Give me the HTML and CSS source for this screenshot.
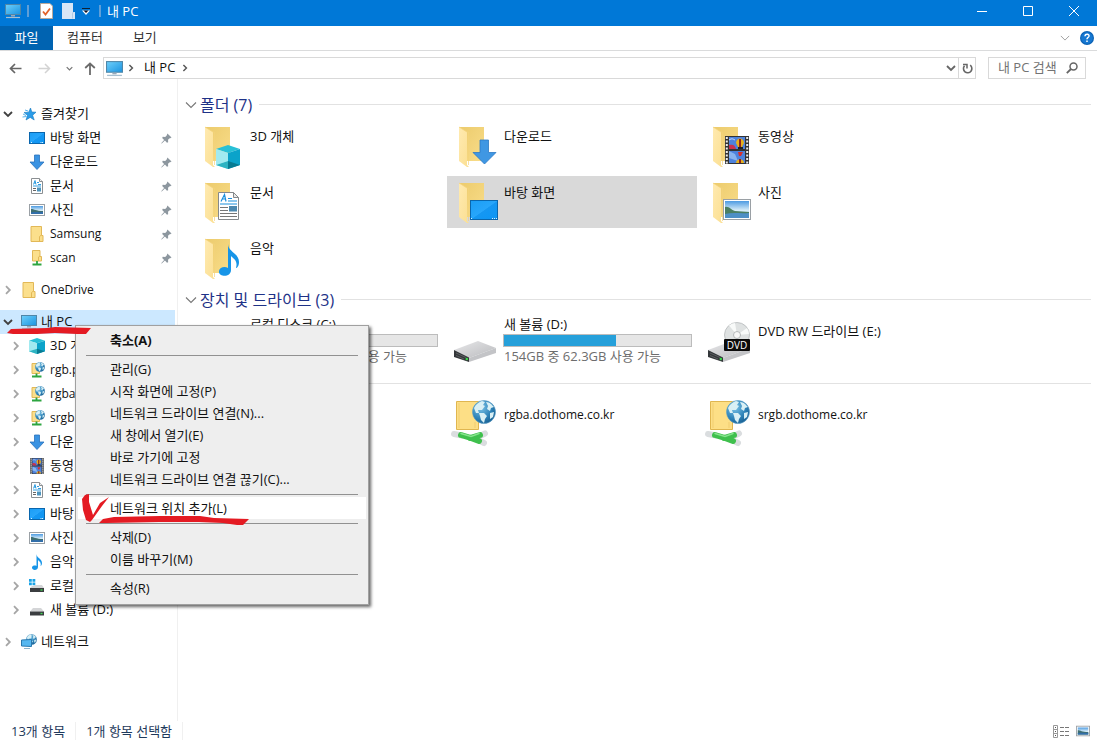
FILE: index.html
```html
<!DOCTYPE html>
<html lang="ko">
<head>
<meta charset="utf-8">
<title>내 PC</title>
<link rel="stylesheet" href="styles.css">
</head>
<body>
<svg class="sprite" aria-hidden="true">
  <defs>
    <linearGradient id="gScreen" x1="0" y1="0" x2="1" y2="1"><stop offset="0" stop-color="#6fd0fb"/><stop offset="1" stop-color="#1a93e0"/></linearGradient>
    <linearGradient id="gDesk" x1="0" y1="0" x2="1" y2="1"><stop offset="0" stop-color="#1b9df5"/><stop offset=".5" stop-color="#27a6fb"/><stop offset=".52" stop-color="#1597f2"/><stop offset="1" stop-color="#0c96f5"/></linearGradient>
    <linearGradient id="gFold" x1="0" y1="0" x2="1" y2="1"><stop offset="0" stop-color="#eccb6c"/><stop offset="1" stop-color="#f9dd8a"/></linearGradient>
    <linearGradient id="gFlap" x1="0" y1="0" x2="1" y2="1"><stop offset="0" stop-color="#ffeab0"/><stop offset="1" stop-color="#fbdf92"/></linearGradient>
    <linearGradient id="gSky" x1="0" y1="0" x2="0" y2="1"><stop offset="0" stop-color="#4d9be2"/><stop offset=".55" stop-color="#d8edf8"/><stop offset="1" stop-color="#8fbfdf"/></linearGradient>
    <linearGradient id="gMetal" x1="0" y1="0" x2="1" y2="1"><stop offset="0" stop-color="#e8e8ea"/><stop offset="1" stop-color="#b9babd"/></linearGradient>
    <radialGradient id="gGlobe" cx=".35" cy=".3" r=".8"><stop offset="0" stop-color="#7cc4e8"/><stop offset=".6" stop-color="#2e83b8"/><stop offset="1" stop-color="#155a8c"/></radialGradient>
  </defs>
  <symbol id="monitor" viewBox="0 0 16 16"><rect x=".5" y="1.500" width="15" height="10" fill="url(#gScreen)" stroke="#4f86a8"/><path d="M6 12h4v1.500H6z" fill="#9ab"/><path d="M1 14.500h14" stroke="#a7bfd0" stroke-width="1.200"/></symbol>
  <symbol id="desktop" viewBox="0 0 16 16"><rect x=".5" y="2.500" width="15" height="11" fill="url(#gDesk)" stroke="#0a66ad"/><path d="M2 12.500h1M11.500 12.500h3" stroke="#d6efff" stroke-dasharray="1 .5"/></symbol>
  <symbol id="down" viewBox="0 0 16 16"><path d="M5.500 1h5v7h4.500L8 15.500 1 8h4.500z" fill="#3a93e2" stroke="#2a72bd" stroke-width=".8"/></symbol>
  <symbol id="doc" viewBox="0 0 16 16"><path d="M2.500.5h8l3 3v12h-11z" fill="#fff" stroke="#8b8f92"/><path d="M10.500.5v3h3" fill="#eee" stroke="#8b8f92"/><path d="M4.500 6.500l1.500-4 1 4M5 5h2M8 4.500h2M4 8h8M9 6.500h3" stroke="#1c93dc" stroke-width=".9" fill="none"/><path d="M4 10.500h3M4 12.500h3" stroke="#666"/><path d="M8 9.500h4v4H8z" fill="#4d95be"/></symbol>
  <symbol id="pic" viewBox="0 0 16 16"><rect x=".5" y="2.500" width="15" height="11" fill="#fff" stroke="#9aa0a5"/><rect x="2" y="4" width="12" height="8" fill="url(#gSky)"/><path d="M2 7c3 0 5 2 12 2v3H2z" fill="#3f6f72"/><path d="M2 10.500c4-1 8 0 12-.5v2H2z" fill="#326eaa"/></symbol>
  <symbol id="folder" viewBox="0 0 16 16"><path d="M2 .5h10.500v9h1.500v6H2z" fill="#fbdf8c" stroke="#e2b857"/><path d="M10.500 15v-4.500l2-1.500" stroke="#e2b857" fill="none"/></symbol>
  <symbol id="netfolder" viewBox="0 0 16 16"><path d="M3.500.5h7.500v6h1.500v4.500h-9z" fill="#fbdf8c" stroke="#e2b857"/><path d="M9.500 11V7l1.500-1" stroke="#e2b857" fill="none"/><path d="M8 11v3M3.500 14.500h9" stroke="#2da540" stroke-width="1.800"/></symbol>
  <symbol id="globe" viewBox="0 0 24 24"><circle cx="12" cy="12" r="11.500" fill="url(#gGlobe)" stroke="#5d9fc7" stroke-width=".6"/><path d="M2 8c2-4 5-6 8-7l3 1-2 3 2 1-3 4-4 0 1 3-3 0zM14 2c4 0 6 3 8 5l-3 1-1 3-3-2 1-3zM7 13l5 0 3 3-2 3-1 4-3-3-1-4zM18 13l4-1-1 5-3 2z" fill="#d9f0f5"/></symbol>
  <symbol id="ftp" viewBox="0 0 16 16"><path d="M3 1.500h7.500v10H3z" fill="#fbdf8c" stroke="#e2b857"/><use href="#globe" x="6" y="0" width="10" height="10"/><path d="M7.500 11.500v3M3 14.500h9.500" stroke="#2da540" stroke-width="1.800"/></symbol>
  <symbol id="cube" viewBox="0 0 24 24"><path d="M12 0L24 4 12 8 0 4z" fill="#28c0d6"/><path d="M0 4l12 4v16L0 20z" fill="#7fe0ea"/><path d="M24 4L12 8v16l12-4z" fill="#0ba3ca"/><path d="M0 20l12-4v8z" fill="#2db3c2"/><path d="M24 20l-12-4v8z" fill="#077b92"/><path d="M0 4l12 4v8L0 20z" fill="#b8f0f3" opacity=".6"/></symbol>
  <symbol id="film" viewBox="0 0 24 28"><path d="M0 0h24v28H0z" fill="#333"/><path d="M1.800 1v27M22.200 1v27" stroke="#ececec" stroke-width="2" stroke-dasharray="2 1.500"/><path d="M4 1h16v12H4zM4 15h16v12H4z" fill="#4d82dc"/><path d="M4 9c4-1 6 0 7 4H4z" fill="#c8324f"/><path d="M4 15l6 3 3 7-9-3z" fill="#89b3ee"/><path d="M4 4c3-2 4-1 6 0" stroke="#cfe0ff" fill="none"/><path d="M11 7c0-6 8-6 8 0l-2 4h-4z" fill="#e5b01c"/><path d="M14 3h2v8h-2z" fill="#8e2420"/><path d="M13 11h5v2h-5z" fill="#222"/><path d="M13 16h5l-2 4h-2z" fill="#d92f2c"/><path d="M11 27c0-5 8-5 8 0z" fill="#e5b01c"/><path d="M14 23h2v4h-2z" fill="#8e2420"/></symbol>
  <symbol id="music" viewBox="0 0 22 32"><path d="M10 0c0 8 11 9 11 18 0 4-2 6-3 6 2-7-2-9-5-12v14c0 8-13 7-12 1 .5-4 6-5 9-3z" fill="#1795e8"/></symbol>
  <symbol id="sdrive" viewBox="0 0 16 16"><path d="M4 6h8l3 3.500H1z" fill="#d4d5d7"/><path d="M1 9.500h14v4H1z" fill="#3b3d40"/><path d="M11.500 11.500h2" stroke="#3fdd52" stroke-width="1.300"/></symbol>
  <symbol id="windrive" viewBox="0 0 16 16"><path d="M0 1h2.800v2.800H0zM3.500 1h2.800v2.800H3.500zM0 4.500h2.800v2.800H0zM3.500 4.500h2.800v2.800H3.500z" fill="#19a2e6"/><path d="M5 7h8l2 3H1l2-2h2z" fill="#d4d5d7"/><path d="M1 10h14v4H1z" fill="#3b3d40"/><path d="M11.500 12h2" stroke="#3fdd52" stroke-width="1.300"/></symbol>
  <symbol id="network" viewBox="0 0 16 16"><use href="#globe" x="5" y="0" width="11" height="11"/><path d="M.5 6l10-.5v7l-10-.5z" fill="#55b7f0" stroke="#2a78ae"/><path d="M3 14.500h6" stroke="#8db4cc"/></symbol>
  <symbol id="star" viewBox="0 0 16 16"><path d="M9.500 2l1.300 4 4.200.2-3.400 3L13.200 14 9.200 11.400 5 14l1.500-4.700L3 6.500l4.700-.3z" fill="#2b9ce8" stroke="#1478c0" stroke-width=".6"/><path d="M2 8l3 1.500M1.500 11l4-.5M4 4l3 1" stroke="#55b3ee"/></symbol>
  <symbol id="pin" viewBox="0 0 12 12"><path d="M7 .5L11.500 5l-1.500.7-1 .2-1.300 1.500.1 2.600-1.300.5-2.200-2.300L.8 11.500.2 11.300l3.200-3.700L1.300 5.500l.6-1.300 2.700.1L6.200 2.800z" fill="#8d979f"/></symbol>
  <symbol id="right" viewBox="0 0 10 10"><path d="M3 1.200L6.800 5 3 8.800" fill="none" stroke="currentColor" stroke-width="1.800"/></symbol>
  <symbol id="open" viewBox="0 0 10 10"><path d="M1 3l4 4 4-4" fill="none" stroke="currentColor" stroke-width="1.800"/></symbol>
  <symbol id="thin" viewBox="0 0 12 12"><path d="M1 3.500l5 5 5-5" fill="none" stroke="currentColor" stroke-width="1.100"/></symbol>
  <symbol id="bigfolder" viewBox="0 0 48 48"><path d="M4 5h25v34H12z" fill="url(#gFold)"/><path d="M4 5l8 5v33l2 2-2 0-8-6z" fill="url(#gFlap)"/><path d="M4 5l8 5h1.500v33" fill="none" stroke="#f3d27b" stroke-width=".7"/></symbol>
  <symbol id="bigdrive" viewBox="0 0 48 48"><path d="M6 33l24-9 18 7-27 10z" fill="url(#gMetal)"/><path d="M21 41l27-10v5L21 45z" fill="#c3c4c7"/><path d="M6 33l15 7.500V45L6 40z" fill="#34373a"/><path d="M8 36l10 4.500M8 38.500l8 3.500" stroke="#6b6e71" stroke-width=".7"/><circle cx="18.800" cy="42" r="1.200" fill="#39e04a"/></symbol>
  <symbol id="bigftp" viewBox="0 0 48 48"><path d="M8.500 2.500h22v28h-22z" fill="#fddf86" stroke="#e0b650"/><path d="M11 4v25M27 29v-6" stroke="#f1cd70"/><use href="#globe" x="24" y="1" width="24" height="24"/><g fill="none" stroke-linecap="round"><path d="M6 35l8 1.500M34 36l3-1.500M32 42l4 2" stroke="#dadddf" stroke-width="6"/><path d="M13 36l10 3 8 3M22 39l10-3" stroke="#3fc04d" stroke-width="6"/><path d="M13 34.500l10 3 8-3" stroke="#86e38c" stroke-width="1.500"/></g></symbol>
</svg>

<div class="window">
  <header class="titlebar">
    <svg class="i16"><use href="#monitor"/></svg>
    <span class="bar"></span>
    <button class="plain quick" aria-label="속성"><svg width="13" height="16" viewBox="0 0 13 16"><path d="M.5.500H10l2.500 2.500v12.500H.5z" fill="#fff" stroke="#b9a99c"/><path d="M3 8.500l2.500 3L10 5.500" fill="none" stroke="#e2622a" stroke-width="1.800"/></svg></button>
    <button class="plain quick" aria-label="새 폴더"><svg width="13" height="16" viewBox="0 0 13 16"><path d="M0 0h11v9h2v7H0z" fill="#d7e6f6"/><path d="M10.500 15.500V10l1-1" fill="none" stroke="#b3cbe4"/></svg></button>
    <button class="plain quick-menu" aria-label="사용자 지정"><svg width="8" height="8" viewBox="0 0 8 8"><path d="M0 1.500h8" stroke="#123"/><path d="M0 3.500h8L4 8z" fill="#fff"/><path d="M1.500 3.500h5L4 6z" fill="#112"/></svg></button>
    <span class="bar"></span>
    <h1 class="title">내 PC</h1>
    <button class="plain winbtn" aria-label="최소화"><svg width="10" height="10"><path d="M0 5.500h10" stroke="#fff"/></svg></button>
    <button class="plain winbtn" aria-label="최대화"><svg width="10" height="10"><path d="M.5.500h9v9h-9z" fill="none" stroke="#fff"/></svg></button>
    <button class="plain winbtn" aria-label="닫기"><svg width="10" height="10"><path d="M0 0l10 10M10 0L0 10" stroke="#fff"/></svg></button>
  </header>

  <nav class="ribbon" aria-label="리본">
    <button class="plain tab file">파일</button>
    <button class="plain tab">컴퓨터</button>
    <button class="plain tab">보기</button>
    <span class="spacer"></span>
    <button class="plain expand" aria-label="리본 확장"><svg class="i10 muted"><use href="#thin"/></svg></button>
    <button class="plain help" aria-label="도움말"><svg width="14" height="14" viewBox="0 0 14 14"><circle cx="7" cy="7" r="7" fill="#0b62b5"/><circle cx="7" cy="7" r="5.800" fill="#1678d2"/><path d="M5 5.200c0-3 4.500-2.500 4 0-.3 1.300-2 1.400-2 3M7 9.500V11" fill="none" stroke="#fff" stroke-width="1.500"/></svg></button>
  </nav>

  <div class="toolbar">
    <button class="plain go" aria-label="뒤로"><svg width="13" height="11" viewBox="0 0 13 11"><path d="M12.500 5.500H1.500M6 1L1.500 5.500 6 10" fill="none" stroke="#666" stroke-width="1.700"/></svg></button>
    <button class="plain go" aria-label="앞으로"><svg width="13" height="11" viewBox="0 0 13 11"><path d="M.5 5.500h11M7 1l4.500 4.500L7 10" fill="none" stroke="#d3d3d3" stroke-width="1.500"/></svg></button>
    <button class="plain recent" aria-label="최근 위치"><svg width="7" height="7" viewBox="0 0 10 10" class="grey"><use href="#open"/></svg></button>
    <button class="plain up" aria-label="위로"><svg width="12" height="13" viewBox="0 0 12 13"><path d="M6 13V1.500M1.200 6L6 1.500 10.800 6" fill="none" stroke="#6b6b6b" stroke-width="1.800"/></svg></button>
    <div class="address">
      <svg class="i17"><use href="#monitor"/></svg>
      <svg class="crumb"><use href="#right"/></svg>
      <a class="place" href="#">내 PC</a>
      <svg class="crumb"><use href="#right"/></svg>
      <span class="spacer"></span>
      <button class="plain history" aria-label="이전 위치"><svg class="i10"><use href="#open"/></svg></button>
      <button class="plain refresh" aria-label="새로 고침"><svg width="11" height="11" viewBox="0 0 11 11"><path d="M8.200 2.200A4.200 4.200 0 1 1 2.500 2.800" fill="none" stroke="#666" stroke-width="1.600"/><path d="M1 1.500h4v4" fill="none" stroke="#666" stroke-width="1.500"/></svg></button>
    </div>
    <label class="search">
      <input type="text" placeholder="내 PC 검색" aria-label="내 PC 검색">
      <svg width="12" height="12" viewBox="0 0 12 12"><circle cx="7.500" cy="4.500" r="3.500" fill="none" stroke="#666" stroke-width="1.500"/><path d="M5 7L.8 11.200" stroke="#666" stroke-width="1.800"/></svg>
    </label>
  </div>

  <div class="body">
    <nav class="tree" aria-label="탐색 창">
      <ul class="group">
        <li class="row"><button class="plain toggle dark" aria-label="접기"><svg class="i10"><use href="#open"/></svg></button><svg class="i16"><use href="#star"/></svg><a href="#">즐겨찾기</a></li>
        <li class="row sub"><span class="toggle"></span><svg class="i16"><use href="#desktop"/></svg><a href="#">바탕 화면</a><svg class="pin"><use href="#pin"/></svg></li>
        <li class="row sub"><span class="toggle"></span><svg class="i16"><use href="#down"/></svg><a href="#">다운로드</a><svg class="pin"><use href="#pin"/></svg></li>
        <li class="row sub"><span class="toggle"></span><svg class="i16"><use href="#doc"/></svg><a href="#">문서</a><svg class="pin"><use href="#pin"/></svg></li>
        <li class="row sub"><span class="toggle"></span><svg class="i16"><use href="#pic"/></svg><a href="#">사진</a><svg class="pin"><use href="#pin"/></svg></li>
        <li class="row sub latin"><span class="toggle"></span><svg class="i16"><use href="#folder"/></svg><a href="#">Samsung</a><svg class="pin"><use href="#pin"/></svg></li>
        <li class="row sub latin"><span class="toggle"></span><svg class="i16"><use href="#netfolder"/></svg><a href="#">scan</a><svg class="pin"><use href="#pin"/></svg></li>
      </ul>
      <ul class="group">
        <li class="row latin"><button class="plain toggle" aria-label="펼치기"><svg class="i10"><use href="#right"/></svg></button><svg class="i16"><use href="#folder"/></svg><a href="#">OneDrive</a></li>
      </ul>
      <ul class="group">
        <li class="row selected"><button class="plain toggle dark" aria-label="접기"><svg class="i10"><use href="#open"/></svg></button><svg class="i16"><use href="#monitor"/></svg><a href="#">내 PC</a>
          <div class="menu" role="menu">
            <button class="plain item default" role="menuitem">축소(A)</button>
            <hr>
            <button class="plain item" role="menuitem">관리(G)</button>
            <button class="plain item" role="menuitem">시작 화면에 고정(P)</button>
            <button class="plain item" role="menuitem">네트워크 드라이브 연결(N)...</button>
            <button class="plain item" role="menuitem">새 창에서 열기(E)</button>
            <button class="plain item" role="menuitem">바로 가기에 고정</button>
            <button class="plain item" role="menuitem">네트워크 드라이브 연결 끊기(C)...</button>
            <hr>
            <button class="plain item hot" role="menuitem">네트워크 위치 추가(L)</button>
            <hr>
            <button class="plain item" role="menuitem">삭제(D)</button>
            <button class="plain item" role="menuitem">이름 바꾸기(M)</button>
            <hr>
            <button class="plain item" role="menuitem">속성(R)</button>
          </div>
          <svg class="marks" width="260" height="220" viewBox="0 0 260 220" aria-hidden="true"><g fill="#e41b23"><path d="M7 23l4-4 36-1 8-1 36 1-5 6-9 0-22-1-18 1-24 0z"/><path d="M82 189l3-4 4-1 0 8 4 13 7-12 9-6-7 9-10 14-2 2-4-2-3-10z"/><path d="M99 213l4-4 11-2 46-1 40 0 14 2 35 1-6 6-6 0-14-2-24-1-40 0-52 1z"/></g></svg>
        </li>
        <li class="row sub"><button class="plain toggle" aria-label="펼치기"><svg class="i10"><use href="#right"/></svg></button><svg class="i16"><use href="#cube"/></svg><a href="#">3D 개</a></li>
        <li class="row sub latin"><button class="plain toggle" aria-label="펼치기"><svg class="i10"><use href="#right"/></svg></button><svg class="i16"><use href="#ftp"/></svg><a href="#">rgb.p</a></li>
        <li class="row sub latin"><button class="plain toggle" aria-label="펼치기"><svg class="i10"><use href="#right"/></svg></button><svg class="i16"><use href="#ftp"/></svg><a href="#">rgba</a></li>
        <li class="row sub latin"><button class="plain toggle" aria-label="펼치기"><svg class="i10"><use href="#right"/></svg></button><svg class="i16"><use href="#ftp"/></svg><a href="#">srgb.</a></li>
        <li class="row sub"><button class="plain toggle" aria-label="펼치기"><svg class="i10"><use href="#right"/></svg></button><svg class="i16"><use href="#down"/></svg><a href="#">다운</a></li>
        <li class="row sub"><button class="plain toggle" aria-label="펼치기"><svg class="i10"><use href="#right"/></svg></button><svg class="i16"><use href="#film"/></svg><a href="#">동영</a></li>
        <li class="row sub"><button class="plain toggle" aria-label="펼치기"><svg class="i10"><use href="#right"/></svg></button><svg class="i16"><use href="#doc"/></svg><a href="#">문서</a></li>
        <li class="row sub"><button class="plain toggle" aria-label="펼치기"><svg class="i10"><use href="#right"/></svg></button><svg class="i16"><use href="#desktop"/></svg><a href="#">바탕</a></li>
        <li class="row sub"><button class="plain toggle" aria-label="펼치기"><svg class="i10"><use href="#right"/></svg></button><svg class="i16"><use href="#pic"/></svg><a href="#">사진</a></li>
        <li class="row sub"><button class="plain toggle" aria-label="펼치기"><svg class="i10"><use href="#right"/></svg></button><svg class="i16"><use href="#music"/></svg><a href="#">음악</a></li>
        <li class="row sub"><button class="plain toggle" aria-label="펼치기"><svg class="i10"><use href="#right"/></svg></button><svg class="i16"><use href="#windrive"/></svg><a href="#">로컬</a></li>
        <li class="row sub"><button class="plain toggle" aria-label="펼치기"><svg class="i10"><use href="#right"/></svg></button><svg class="i16"><use href="#sdrive"/></svg><a href="#">새 볼륨 (D:)</a></li>
      </ul>
      <ul class="group">
        <li class="row"><button class="plain toggle" aria-label="펼치기"><svg class="i10"><use href="#right"/></svg></button><svg class="i16"><use href="#network"/></svg><a href="#">네트워크</a></li>
      </ul>
    </nav>

    <main class="content">
      <section>
        <h2 class="heading"><svg class="i12"><use href="#thin"/></svg>폴더 (7)</h2>
        <div class="tiles">
          <a class="tile" href="#"><svg class="i48" viewBox="0 0 48 48"><use href="#bigfolder"/><use href="#cube" x="15" y="23" width="24" height="24"/></svg><span class="info low">3D 개체</span></a>
          <a class="tile" href="#"><svg class="i48" viewBox="0 0 48 48"><use href="#bigfolder"/><path d="M25 18h8.500v12.500H41L29.500 42 18 30.500h7z" fill="#3f97e3" stroke="#2b79c5" stroke-width=".8"/></svg><span class="info low">다운로드</span></a>
          <a class="tile" href="#"><svg class="i48" viewBox="0 0 48 48"><use href="#bigfolder"/><use href="#film" x="16" y="14" width="24" height="28"/></svg><span class="info low">동영상</span></a>
          <a class="tile" href="#"><svg class="i48" viewBox="0 0 48 48"><use href="#bigfolder"/><path d="M17.500 14.500h15l5 5v22h-20z" fill="#fff" stroke="#85898c"/><path d="M32.500 14.500v5h5z" fill="#e9e9e9" stroke="#85898c"/><path d="M20 23.500l3.500-7 1.500 7M21 21h4M27 20.500h4M27 23h9M19 26h17" stroke="#1b8fdc" stroke-width="1.200" fill="none"/><path d="M19 29.500h8M19 32.500h8M19 35.500h17M19 38.500h17" stroke="#777"/><path d="M28 28h8v5.500h-8z" fill="#4c88ae"/></svg><span class="info low">문서</span></a>
          <a class="tile active" href="#"><svg class="i48" viewBox="0 0 48 48"><use href="#bigfolder"/><rect x="15.500" y="22.500" width="27" height="19" fill="url(#gDesk)" stroke="#0a66ad"/><path d="M16 40.500h2M37 40.500h5" stroke="#d6efff" stroke-dasharray="1 1"/></svg><span class="info low">바탕 화면</span></a>
          <a class="tile" href="#"><svg class="i48" viewBox="0 0 48 48"><use href="#bigfolder"/><rect x="14.500" y="21.500" width="27" height="20" fill="#fff" stroke="#9aa0a5"/><rect x="16" y="23" width="24" height="17" fill="url(#gSky)"/><path d="M16 29c4-1 6 3 10 4l14 1v3H16z" fill="#4b7f62"/><path d="M16 36c8-2 16 0 24-1v5H16z" fill="#4e8fc4"/></svg><span class="info low">사진</span></a>
          <a class="tile" href="#"><svg class="i48" viewBox="0 0 48 48"><use href="#bigfolder"/><use href="#music" x="17" y="10" width="22" height="32"/></svg><span class="info low">음악</span></a>
        </div>
      </section>
      <section>
        <h2 class="heading"><svg class="i12"><use href="#thin"/></svg>장치 및 드라이브 (3)</h2>
        <div class="tiles drives">
          <a class="tile" href="#"><svg class="i48"><use href="#bigdrive"/></svg><span class="info">로컬 디스크 (C:)<span class="gauge"><span class="fill" style="width:40%"></span></span><span class="free">118GB 중 70.1GB 사용 가능</span></span></a>
          <a class="tile" href="#"><svg class="i48"><use href="#bigdrive"/></svg><span class="info">새 볼륨 (D:)<span class="gauge"><span class="fill" style="width:60%"></span></span><span class="free">154GB 중 62.3GB 사용 가능</span></span></a>
          <a class="tile" href="#"><svg class="i48" viewBox="0 0 48 48"><use href="#bigdrive"/><circle cx="35" cy="18" r="12.500" fill="#dfe2e2" stroke="#b5b9ba" stroke-width=".8"/><path d="M35 18L27 8.500a12 12 0 0 1 6-2.500zM35 18l10-7a12 12 0 0 1 2 6z" fill="#f8faf9"/><circle cx="35" cy="18" r="3.500" fill="#f6f6f6" stroke="#a6aaab" stroke-width=".8"/><rect x="22" y="22" width="26" height="12" rx="1" fill="#0c0c0c"/><text x="35" y="32" text-anchor="middle" class="disc">DVD</text></svg><span class="info low">DVD RW 드라이브 (E:)</span></a>
        </div>
      </section>
      <section>
        <h2 class="heading" aria-label="네트워크 위치"><svg class="i12"><use href="#thin"/></svg></h2>
        <div class="tiles sites latin">
          <a class="tile" href="#" aria-label="rgb"><svg class="i48"><use href="#bigftp"/></svg></a>
          <a class="tile" href="#"><svg class="i48"><use href="#bigftp"/></svg><span class="info low">rgba.dothome.co.kr</span></a>
          <a class="tile" href="#"><svg class="i48"><use href="#bigftp"/></svg><span class="info low">srgb.dothome.co.kr</span></a>
        </div>
      </section>
    </main>
  </div>

  <footer class="status">
    <span class="count">13개 항목</span>
    <span class="count">1개 항목 선택함</span>
    <span class="spacer"></span>
    <button class="plain view" aria-label="자세히"><svg width="17" height="13" viewBox="0 0 17 13"><path d="M.5.500h4v12h-4zM.5 4.500h4M.5 8.500h4" fill="none" stroke="#999"/><path d="M2 2.500h1M2 6.500h1M2 10.500h1" stroke="#555"/><path d="M7 2.500h4M12 2.500h4M7 6.500h4M12 6.500h4M7 10.500h4M12 10.500h4" stroke="#777"/></svg></button>
    <button class="plain view" aria-label="큰 아이콘"><svg class="i14"><use href="#pic"/></svg></button>
  </footer>
</div>
</body>
</html>
```

FILE: styles.css
```css
* { box-sizing: border-box; }

body {
  margin: 0;
  background: #fff;
  color: #111;
  font: 13px/18px "Open Sans", "Noto Sans CJK KR", sans-serif;
}

a { color: inherit; text-decoration: none; }
svg { display: block; flex: none; }

.sprite { position: absolute; width: 0; height: 0; }
.plain { border: 0; margin: 0; padding: 0; background: none; color: inherit; font: inherit; display: flex; align-items: center; justify-content: center; flex: none; }
.spacer { flex: 1; }
.latin { font-size: 12px; }

.i10 { width: 10px; height: 10px; }
.i12 { width: 12px; height: 12px; }
.i14 { width: 14px; height: 14px; }
.i16 { width: 16px; height: 16px; }
.i17 { width: 17px; height: 17px; }
.i48 { width: 48px; height: 48px; }
.muted { color: #999; }
.grey { color: #777; }

.window { display: flex; flex-direction: column; min-height: 100vh; }

.titlebar { display: flex; align-items: center; height: 26px; padding: 0 0 5px 5px; background: #0078d7; color: #fff; }
.bar { width: 2px; height: 12px; margin: 0 6px; background: #5f9fd8; }
.quick { width: 22px; }
.quick-menu { width: 14px; }
.title { flex: 1; margin: 0; font-size: 13px; font-weight: 400; }
.winbtn { width: 46px; height: 20px; }

.ribbon { display: flex; align-items: stretch; height: 25px; border-bottom: 1px solid #dadbdc; }
.tab { padding: 0 12px 2px; margin-right: 6px; color: #333; }
.file { width: 53px; margin-right: 2px; background: #0063b1; color: #fff; }
.expand { width: 24px; }
.help { width: 20px; }

.toolbar { display: flex; align-items: center; padding: 6px 11px 0 1px; }
.go { width: 29px; }
.recent { width: 20px; }
.up { width: 22px; }
.address { display: flex; flex: 1; align-items: center; height: 22px; margin: 0 12px 0 2px; padding-left: 2px; border: 1px solid #d9d9d9; }
.crumb { width: 8px; height: 8px; margin: 0 4px; color: #555; }
.place { margin: 0 2px 2px 5px; }
.history { width: 15px; color: #666; }
.refresh { width: 17px; height: 20px; border-left: 1px solid #d9d9d9; }
.search { display: flex; align-items: center; width: 98px; height: 22px; padding: 0 7px 0 9px; border: 1px solid #d9d9d9; }
.search input { flex: 1; min-width: 0; padding: 0 0 2px; border: 0; outline: 0; background: none; font: inherit; }
.search input::placeholder { color: #737373; opacity: 1; }

.body { display: flex; flex: 1; }

.tree { width: 178px; flex: none; padding: 23px 2px 0 0; border-right: 1px solid #f0f0f0; }
.group { margin: 0 0 8px; padding: 0; list-style: none; }
.row { position: relative; display: flex; align-items: center; height: 24px; padding: 0 3px; white-space: nowrap; }
.row a { flex: 1; min-width: 0; margin-left: 4px; padding-bottom: 2px; }
.row.latin a { padding-bottom: 0; }
.sub { padding-left: 11px; }
.toggle { width: 10px; margin-right: 8px; color: #a6a6a6; }
.row .toggle { flex: none; }
.dark.toggle { color: #404040; }
.sub a { margin-left: 5px; }
.pin { width: 11px; height: 11px; }
.selected { z-index: 2; background: #cce8ff; }

.menu {
  position: absolute;
  top: 15px;
  left: 75px;
  width: 294px;
  padding: 3px 2px 5px;
  border: 1px solid #a0a0a0;
  background: #eee;
  box-shadow: 2px 2px 3px rgba(0, 0, 0, .6);
}
.item { width: 100%; height: 22px; padding-left: 32px; justify-content: flex-start; }
.default { font-weight: 700; }
.hot { background: #fff; }
.menu hr { height: 1px; margin: 4px 8px 2px; border: 0; background: #919191; }
.marks { position: absolute; top: 0; left: 0; pointer-events: none; }

.content { flex: 1; min-width: 0; padding: 10px 6px 0 7px; }
.heading { display: flex; align-items: center; gap: 3px; height: 31px; margin: 0; color: #1e3287; font-size: 16px; font-weight: 400; }
.heading svg { color: #777; }
.heading::after { content: ""; flex: 1; height: 1px; margin-left: 4px; background: #e2e2e2; }
.tiles { display: grid; grid-template-columns: repeat(auto-fill, 250px); gap: 4px; padding-left: 8px; }
.tile { display: flex; height: 52px; padding: 0 5px 0 8px; }
.tile svg { margin-top: 2px; }
.active { background: #d9d9d9; }
.info { flex: 1; margin-left: 1px; }
.low { padding-top: 7px; }
.drives .tile { height: 53px; }
.drives .tile, .sites .tile { padding-left: 1px; }
.drives .info, .sites .info { margin-left: 8px; }
.sites .tile svg { margin-top: 0; }
.gauge { display: block; height: 13px; margin: 1px 0 0 -1px; border: 1px solid #bcbcbc; background: #e6e6e6; }
.fill { display: block; height: 100%; background: #26a0da; }
.free { display: block; color: #6d6d6d; }
.disc { fill: #fff; font: 10px "Open Sans", sans-serif; }

.status { display: flex; align-items: center; height: 20px; padding: 0 3px 0 11px; color: #1e395b; }
.count { margin-right: 10px; padding-right: 10px; border-right: 1px solid #f0f0f0; }
.view { width: 22px; }
```
